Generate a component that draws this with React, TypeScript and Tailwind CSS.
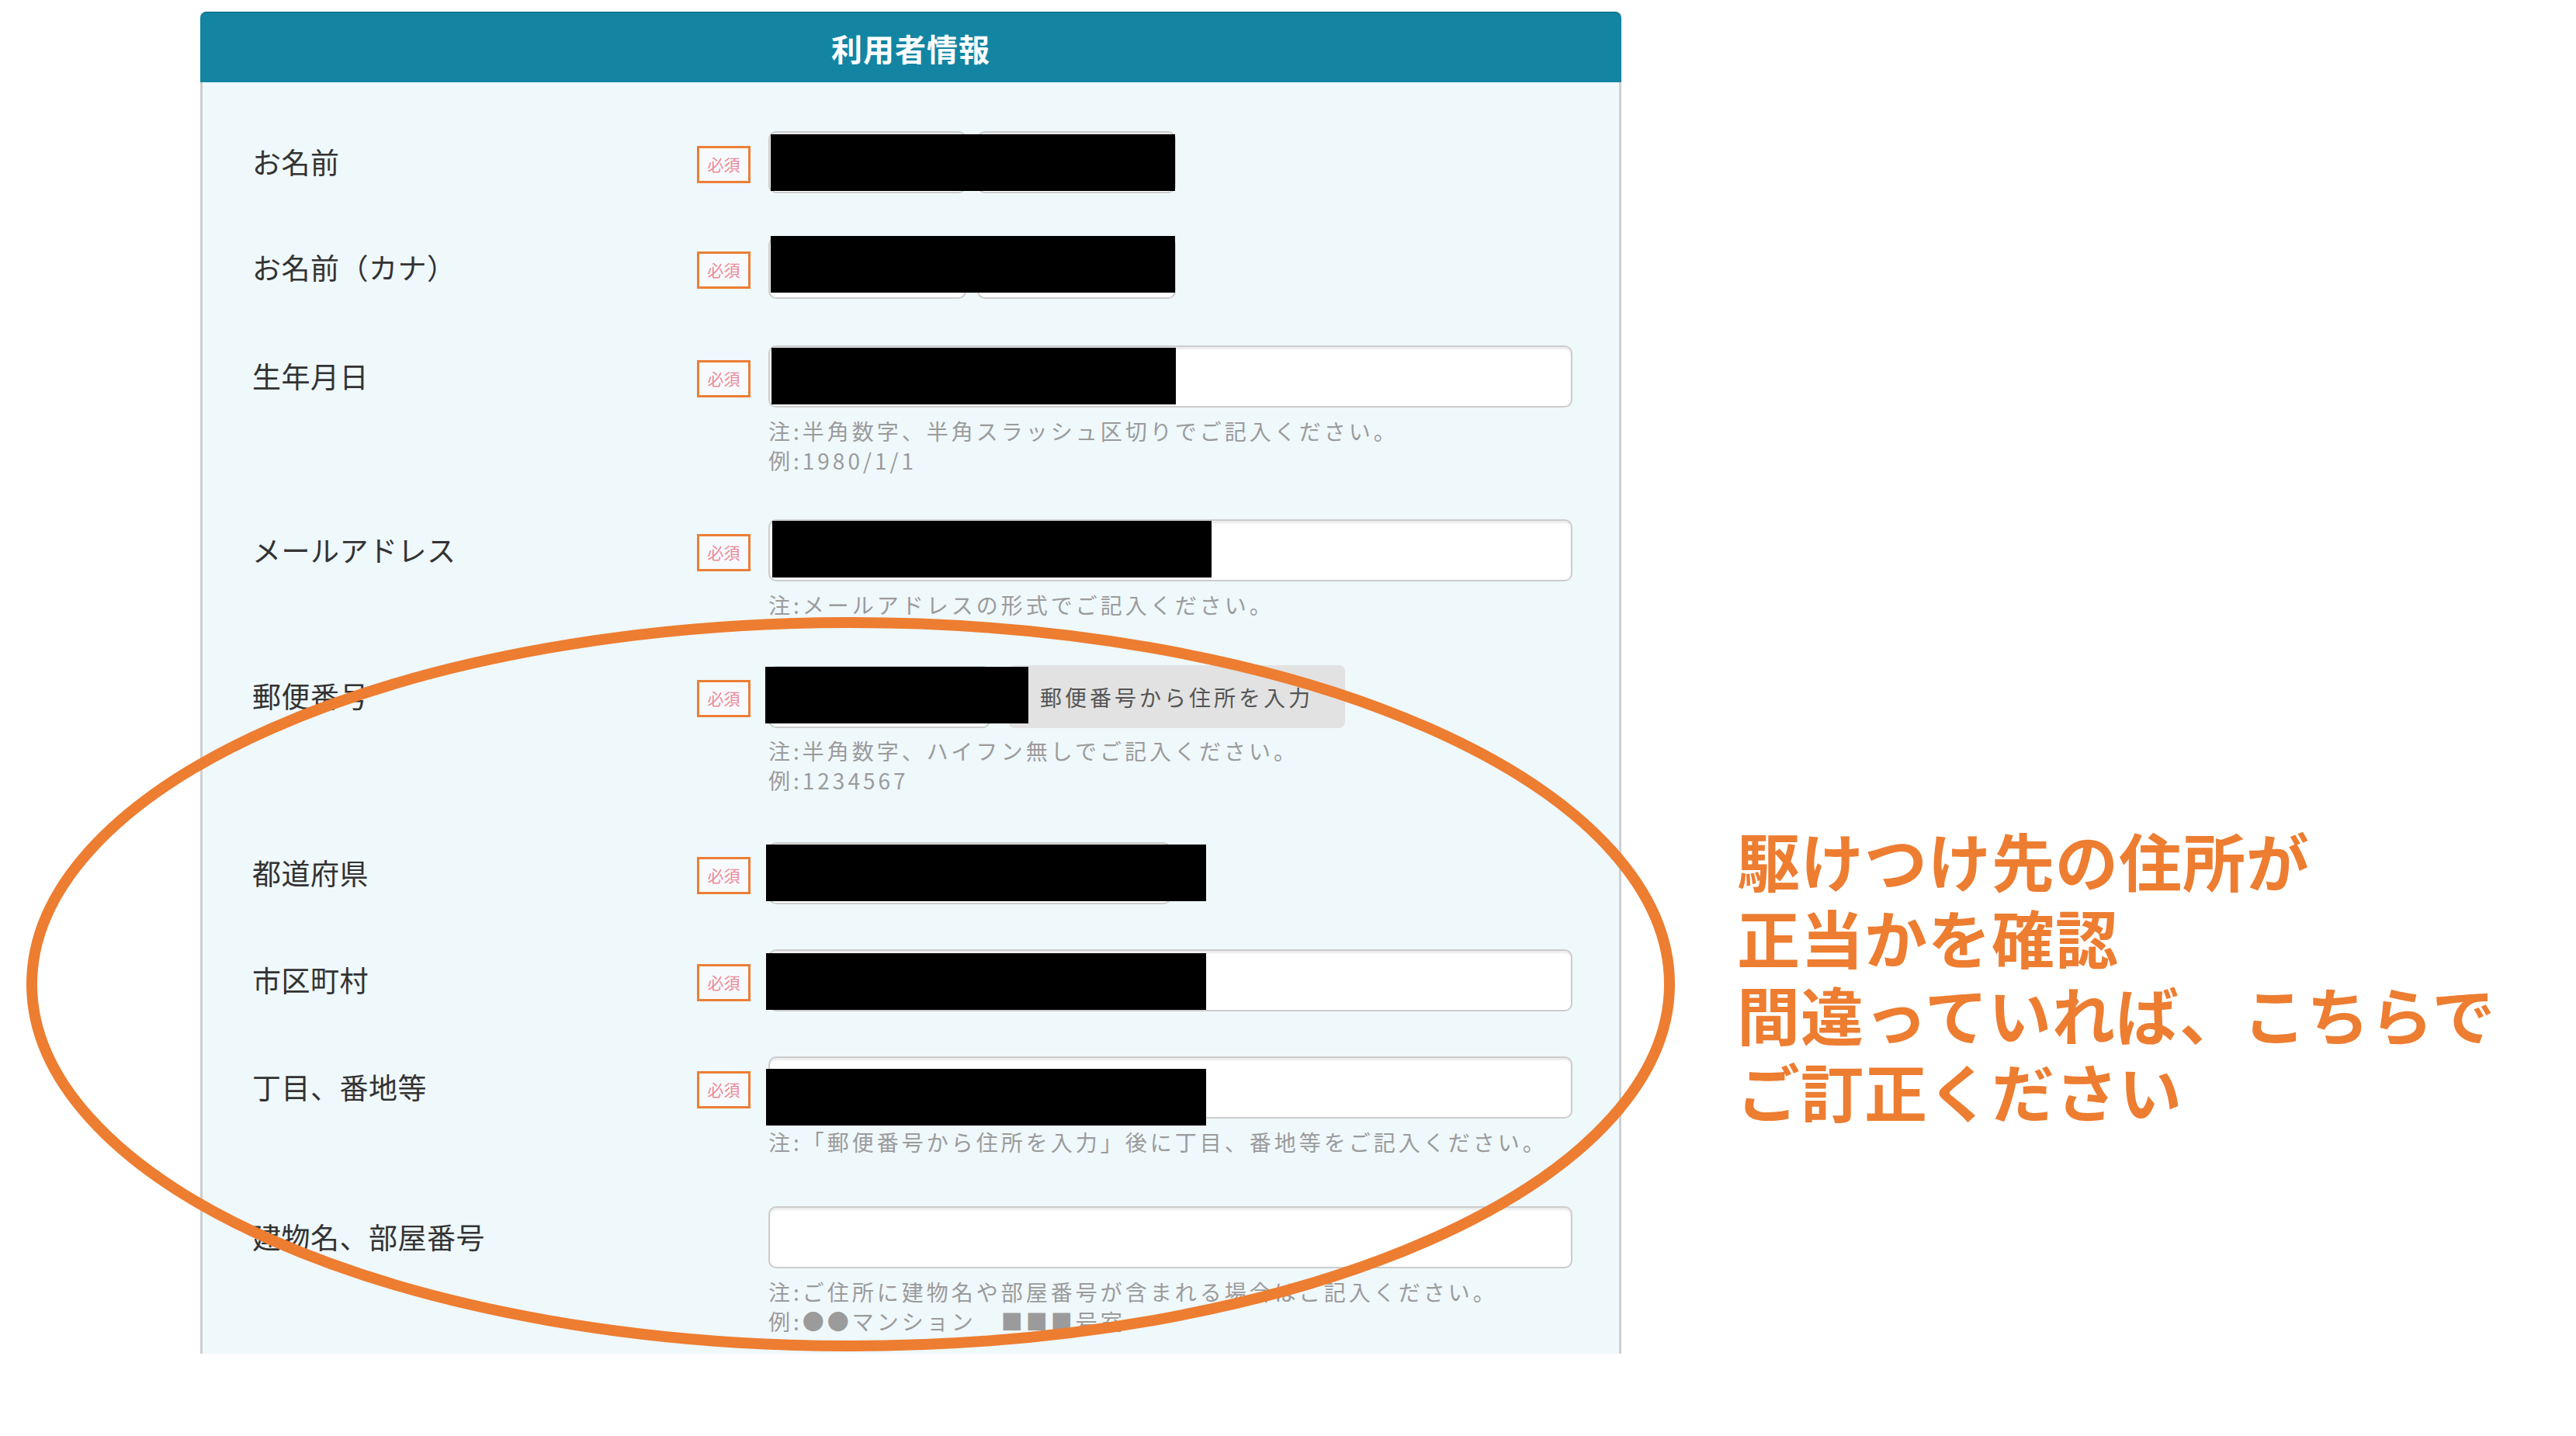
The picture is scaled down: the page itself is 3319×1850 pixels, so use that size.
import React from "react";

type Row = {
  label: string;
  kind: "name" | "text" | "postal" | "select";
  gap: string;
  black?: string;
  notes: string[];
};

const rows: Row[] = [
  { label: "お名前", kind: "name", gap: "mt-[63px]", black: "left-[3px] top-[4px] w-[521px]", notes: [] },
  { label: "お名前（カナ）", kind: "name", gap: "mt-[56px]", black: "left-[3px] top-[-1px] w-[521px]", notes: [] },
  {
    label: "生年月日",
    kind: "text",
    gap: "mt-[60px]",
    black: "left-[4px] top-[3px] w-[521px]",
    notes: ["注:半角数字、半角スラッシュ区切りでご記入ください。", "例:1980/1/1"],
  },
  {
    label: "メールアドレス",
    kind: "text",
    gap: "mt-[57px]",
    black: "left-[5px] top-[2px] w-[566px]",
    notes: ["注:メールアドレスの形式でご記入ください。"],
  },
  {
    label: "郵便番号",
    kind: "postal",
    gap: "mt-[59px]",
    black: "left-[-4px] top-[2px] w-[339px]",
    notes: ["注:半角数字、ハイフン無しでご記入ください。", "例:1234567"],
  },
  { label: "都道府県", kind: "select", gap: "mt-[61px]", black: "left-[-3px] top-[3px] w-[567px]", notes: [] },
  { label: "市区町村", kind: "text", gap: "mt-[58px]", black: "left-[-3px] top-[5px] w-[567px]", notes: [] },
  {
    label: "丁目、番地等",
    kind: "text",
    gap: "mt-[58px]",
    black: "left-[-3px] top-[16px] w-[567px]",
    notes: ["注:「郵便番号から住所を入力」後に丁目、番地等をご記入ください。"],
  },
  {
    label: "建物名、部屋番号",
    kind: "text",
    gap: "mt-[64px]",
    notes: ["注:ご住所に建物名や部屋番号が含まれる場合はご記入ください。", "例:●●マンション　■■■号室"],
  },
];

const inputBox =
  "h-[80px] bg-white border-2 border-[#cccccc] rounded-[10px] shadow-[inset_0_3px_2px_rgba(0,0,0,0.08)]";

function Field({ row }: { row: Row }) {
  return (
    <div className="relative h-[80px]">
      {row.kind === "name" && (
        <div className="flex gap-[14px]">
          <div className={`${inputBox} w-[255px]`} />
          <div className={`${inputBox} w-[256px]`} />
        </div>
      )}
      {row.kind === "text" && <div className={`${inputBox} w-[1036px]`} />}
      {row.kind === "select" && <div className={`${inputBox} w-[519px]`} />}
      {row.kind === "postal" && (
        <div className="flex items-center gap-[23px]">
          <div className={`${inputBox} w-[286px]`} />
          <div className="h-[81px] w-[434px] rounded-[8px] bg-[#e2e2e2] flex items-center justify-center text-[28px] tracking-[4px] text-[#555555]">
            郵便番号から住所を入力
          </div>
        </div>
      )}
      {row.black && <div className={`absolute h-[73px] bg-black ${row.black}`} />}
    </div>
  );
}

export default function App() {
  return (
    <div className="relative w-[3319px] h-[1850px] bg-white overflow-hidden font-['Noto_Sans_CJK_JP','Noto_Sans',sans-serif]">
      <div className="flex">
        {/* form panel */}
        <div className="ml-[258px] mt-[15px] w-[1831px]">
          <div className="h-[91px] rounded-t-[8px] bg-[#1385a3] border-t-2 border-[#0f7590] flex items-center justify-center text-[40px] font-bold tracking-[1px] text-white">
            利用者情報
          </div>
          <div className="h-[1638px] overflow-hidden bg-[#eff8fb] border-x-[3px] border-[#cfcfcf] pl-[64px]">
            {rows.map((row) => (
              <div key={row.label} className={`flex items-start ${row.gap}`}>
                <div className="w-[573px] h-[80px] flex items-center text-[37px] tracking-[0.5px] text-[#333333]">
                  {row.label}
                </div>
                <div className="w-[69px] h-[80px] flex items-center">
                  {row.label !== "建物名、部屋番号" && (
                    <div className="mt-[6px] w-[69px] h-[48px] border-[3px] border-[#ec7e35] bg-[#f7fafd] flex items-center justify-center text-[21px] text-[#ec8a98]">
                      必須
                    </div>
                  )}
                </div>
                <div className="ml-[23px] w-[1036px]">
                  <Field row={row} />
                  {row.notes.length > 0 && (
                    <div className="mt-[11px] text-[28px] leading-[38px] tracking-[4px] text-[#9b9b9b] whitespace-nowrap">
                      {row.notes.map((n) => (
                        <div key={n}>{n}</div>
                      ))}
                    </div>
                  )}
                </div>
              </div>
            ))}
          </div>
        </div>

        {/* annotation */}
        <div className="ml-[149px] pt-[1057px] text-[81px] font-bold leading-[99px] tracking-[1px] text-[#ed7d31] whitespace-nowrap">
          <div>駆けつけ先の住所が</div>
          <div>正当かを確認</div>
          <div>間違っていれば、こちらで</div>
          <div>ご訂正ください</div>
        </div>
      </div>

      {/* orange ellipse highlight */}
      <svg className="absolute inset-0 pointer-events-none" width="3319" height="1850" viewBox="0 0 3319 1850">
        <ellipse cx="1096" cy="1268" rx="1055" ry="466" fill="none" stroke="#ed7d31" strokeWidth="14" />
      </svg>
    </div>
  );
}
